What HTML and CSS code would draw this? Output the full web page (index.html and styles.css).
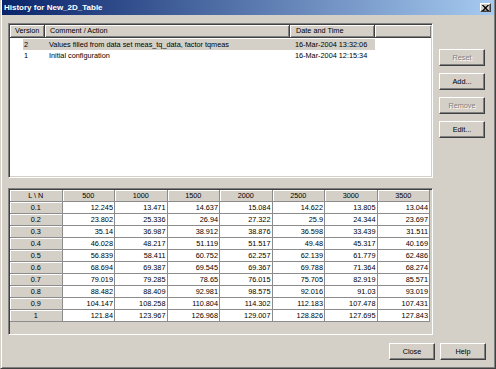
FILE: index.html
```html
<!DOCTYPE html>
<html>
<head>
    <title>History for New_2D_Table</title>
    <link rel="stylesheet" href="styles.css">
</head>
<body>
    <div class="window">
        <!-- Title bar -->
        <div class="titlebar">
            <span class="title">History for New_2D_Table</span>
            <span class="title-close">
                <svg viewBox="0 0 7 6" width="7" height="6">
                    <path d="M0 0h1.5l2 2 2-2h1.5v0.3l-2.6 2.7 2.6 2.7v0.3h-1.5l-2-2-2 2h-1.5v-0.3l2.6-2.7-2.6-2.7z" fill="#000"></path>
                </svg>
            </span>
        </div>

        <div class="content">
            <div class="top">
                <!-- Version list -->
                <div class="listview">
                    <div class="lv-header">
                        <div class="lv-col col-version">Version</div>
                        <div class="lv-col col-comment">Comment / Action</div>
                        <div class="lv-col col-date">Date and Time</div>
                        <div class="lv-col col-rest"></div>
                    </div>
                    <div class="lv-row selected">
                        <span class="c-version">2</span>
                        <span class="c-comment">Values filled from data set meas_tq_data, factor tqmeas</span>
                        <span class="c-date">16-Mar-2004 13:32:06</span>
                    </div>
                    <div class="lv-row">
                        <span class="c-version">1</span>
                        <span class="c-comment">Initial configuration</span>
                        <span class="c-date">16-Mar-2004 12:15:34</span>
                    </div>
                </div>

                <div class="side-buttons">
                    <button class="btn" disabled>Reset</button>
                    <button class="btn">Add...</button>
                    <button class="btn" disabled>Remove</button>
                    <button class="btn">Edit...</button>
                </div>
            </div>

            <!-- Table values -->
            <div class="grid-box">
                <table class="grid">
                    <tr>
                        <th>L \ N</th><th>500</th><th>1000</th><th>1500</th><th>2000</th><th>2500</th><th>3000</th><th>3500</th>
                    </tr>
                    <tr>
                        <th>0.1</th><td>12.245</td><td>13.471</td><td>14.637</td><td>15.084</td><td>14.622</td><td>13.805</td><td>13.044</td>
                    </tr>
                    <tr>
                        <th>0.2</th><td>23.802</td><td>25.336</td><td>26.94</td><td>27.322</td><td>25.9</td><td>24.344</td><td>23.697</td>
                    </tr>
                    <tr>
                        <th>0.3</th><td>35.14</td><td>36.987</td><td>38.912</td><td>38.876</td><td>36.598</td><td>33.439</td><td>31.511</td>
                    </tr>
                    <tr>
                        <th>0.4</th><td>46.028</td><td>48.217</td><td>51.119</td><td>51.517</td><td>49.48</td><td>45.317</td><td>40.169</td>
                    </tr>
                    <tr>
                        <th>0.5</th><td>56.839</td><td>58.411</td><td>60.752</td><td>62.257</td><td>62.139</td><td>61.779</td><td>62.486</td>
                    </tr>
                    <tr>
                        <th>0.6</th><td>68.694</td><td>69.387</td><td>69.545</td><td>69.367</td><td>69.788</td><td>71.364</td><td>68.274</td>
                    </tr>
                    <tr>
                        <th>0.7</th><td>79.019</td><td>79.285</td><td>78.65</td><td>76.015</td><td>75.705</td><td>82.919</td><td>85.571</td>
                    </tr>
                    <tr>
                        <th>0.8</th><td>88.482</td><td>88.409</td><td>92.981</td><td>98.575</td><td>92.016</td><td>91.03</td><td>93.019</td>
                    </tr>
                    <tr>
                        <th>0.9</th><td>104.147</td><td>108.258</td><td>110.804</td><td>114.302</td><td>112.183</td><td>107.478</td><td>107.431</td>
                    </tr>
                    <tr>
                        <th>1</th><td>121.84</td><td>123.967</td><td>126.968</td><td>129.007</td><td>128.826</td><td>127.695</td><td>127.843</td>
                    </tr>
                </table>
            </div>

            <div class="bottom-buttons">
                <button class="btn">Close</button>
                <button class="btn">Help</button>
            </div>
        </div>
    </div>
</body>
</html>
```

FILE: styles.css
```css
body {
    margin: 0;
    font-family: "Liberation Sans", Arial, sans-serif;
    font-size: 7.3px;
    color: #000;
}

.window {
    width: 496px;
    height: 369px;
    box-sizing: border-box;
    background: #d4d0c8;
    border: 1px solid;
    border-top: none;
    border-color: #d4d0c8 #404040 #404040 #d4d0c8;
    box-shadow: inset 1px 0 #fff, inset -1px -1px #808080;
    display: flex;
    flex-direction: column;
}

.titlebar {
    height: 15px;
    margin: 0 1px;
    display: flex;
    align-items: center;
    justify-content: space-between;
    background: linear-gradient(to right, #0a246a, #a6caf0);
    padding: 0 3px 0 2px;
}

.title {
    color: #fff;
    font-weight: bold;
    font-size: 8px;
}

.title-close {
    width: 11px;
    height: 9px;
    box-sizing: border-box;
    display: flex;
    align-items: center;
    justify-content: center;
    background: #d4d0c8;
    border: 1px solid;
    border-color: #fff #404040 #404040 #fff;
    box-shadow: inset -1px -1px #808080;
}

.title-close svg {
    display: block;
}

.content {
    flex: 1;
    padding: 8px 9px 0 7px;
    display: flex;
    flex-direction: column;
}

.top {
    display: flex;
    gap: 6px;
}

/* list view */
.listview {
    width: 425px;
    height: 155px;
    box-sizing: border-box;
    background: #fff;
    border: 1px solid;
    border-color: #808080 #fff #fff #808080;
    box-shadow: inset 1px 1px #404040, inset -1px -1px #d4d0c8;
    padding: 1px;
}

.lv-header {
    display: flex;
    height: 13px;
}

.lv-col {
    box-sizing: border-box;
    height: 13px;
    line-height: 12px;
    background: #d4d0c8;
    border-right: 1px solid #404040;
    border-bottom: 1px solid #404040;
    box-shadow: inset 1px 1px #fff, inset -1px -1px #808080;
    white-space: nowrap;
}

.col-version {
    width: 35px;
    padding-left: 5px;
}

.col-comment {
    width: 245px;
    padding-left: 5px;
}

.col-date {
    width: 85px;
    padding-left: 6px;
}

.col-rest {
    flex: 1;
    border-right: none;
}

.lv-row {
    display: flex;
    height: 11px;
    line-height: 11px;
    margin-left: 13px;
    width: 352px;
    white-space: nowrap;
}

.lv-row.selected {
    margin-top: 1px;
    background: #d4d0c8;
}

.c-version {
    width: 22px;
    padding-left: 1px;
    box-sizing: border-box;
}

.c-comment {
    width: 245px;
    padding-left: 4px;
    box-sizing: border-box;
}

.c-date {
    width: 85px;
    padding-left: 5px;
    box-sizing: border-box;
}

/* buttons */
.btn {
    width: 46px;
    height: 17px;
    margin: 0;
    padding: 0;
    font-family: "Liberation Sans", Arial, sans-serif;
    font-size: 7.3px;
    color: #000;
    background: #d4d0c8;
    border: 1px solid;
    border-color: #fff #404040 #404040 #fff;
    box-shadow: inset -1px -1px #808080;
    border-radius: 0;
}

.btn:disabled {
    color: #808080;
    text-shadow: 1px 1px #fff;
}

.side-buttons {
    display: flex;
    flex-direction: column;
    gap: 7px;
    padding-top: 26px;
}

/* values grid */
.grid-box {
    margin-top: 10px;
    width: 425px;
    height: 147px;
    box-sizing: border-box;
    background: #d4d0c8;
    border: 1px solid;
    border-color: #808080 #fff #fff #808080;
    box-shadow: inset 1px 1px #404040, inset -1px -1px #d4d0c8;
    padding: 1px;
}

.grid {
    width: 420px;
    table-layout: fixed;
    border-collapse: separate;
    border-spacing: 0;
}

.grid th,
.grid td {
    height: 11px;
    line-height: 11px;
    padding: 0;
    border-right: 1px solid #8c8c8c;
    border-bottom: 1px solid #8c8c8c;
    white-space: nowrap;
    overflow: hidden;
}

.grid th {
    font-weight: normal;
    text-align: center;
    background: #d4d0c8;
    box-shadow: inset 1px 1px #fff;
}

.grid td {
    background: #fff;
    text-align: right;
    padding-right: 1px;
}

.bottom-buttons {
    margin-top: 8px;
    display: flex;
    justify-content: flex-end;
    gap: 5px;
}
```
